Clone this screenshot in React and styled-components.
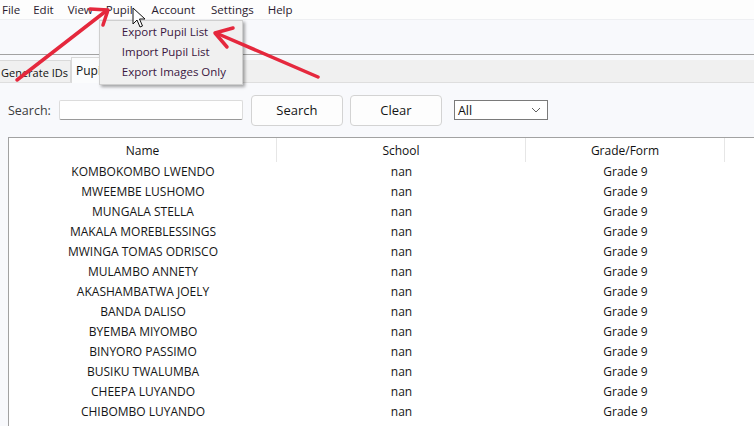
import React from 'react';
import styled, { createGlobalStyle } from 'styled-components';

const GlobalStyle = createGlobalStyle`
  html, body {
    margin: 0;
    padding: 0;
    background: #f8f9fc;
    overflow: hidden;
  }
  * { box-sizing: border-box; }
`;

const Window = styled.div`
  position: relative;
  width: 754px;
  height: 426px;
  overflow: hidden;
  display: flex;
  flex-direction: column;
  background: #f8f9fc;
  font-family: "Open Sans", "Noto Sans", sans-serif;
  color: #1b1b1b;
`;

const MenuBar = styled.nav`
  height: 20px;
  flex: none;
  display: flex;
  align-items: center;
  padding-left: 2px;
  background: #fdfdfd;
  border-bottom: 1px solid #eeeff2;
  font-size: 11.5px;
  color: #2a1a2e;
`;

const MenuItem = styled.div`
  position: relative;
  height: 19px;
  line-height: 19px;
  margin-right: ${p => p.gap ?? 14}px;
`;

const Dropdown = styled.div`
  position: absolute;
  top: 20px;
  left: -7px;
  width: 144px;
  padding: 1px 0 2px;
  background: #f0f0f0;
  border: 1px solid #cfcfcf;
  box-shadow: 2px 2px 3px rgba(0, 0, 0, 0.35);
  z-index: 5;
`;

const DropdownItem = styled.div`
  height: 20px;
  line-height: 20px;
  padding-left: 22px;
  font-size: 11.5px;
  color: #3a1640;
  white-space: nowrap;
`;

const ToolArea = styled.div`
  height: 35px;
  flex: none;
  background: #f8f9fc;
  border-bottom: 1px solid #a2a2a2;
`;

const TabStrip = styled.div`
  flex: none;
  margin-top: 5px;
  height: 23px;
  display: flex;
  align-items: flex-end;
  background: #f0f0f0;
  border-bottom: 1px solid #dedede;
`;

const Tab = styled.div`
  height: ${p => (p.active ? '26px' : '22px')};
  line-height: ${p => (p.active ? '25px' : '23px')};
  margin-bottom: ${p => (p.active ? '-1px' : '0')};
  padding: ${p => (p.active ? '0 8px 0 4px' : '0 2px 0 1px')};
  background: ${p => (p.active ? '#fbfcfd' : '#f0f0f0')};
  border: 1px solid #d9d9d9;
  border-left: ${p => (p.active ? '1px solid #d9d9d9' : 'none')};
  border-bottom: none;
  font-size: ${p => (p.active ? '12px' : '11px')};
  color: #111;
  white-space: nowrap;
`;

const SearchPanel = styled.div`
  height: 54px;
  flex: none;
  display: flex;
  align-items: center;
  padding: 0 8px;
`;

const Label = styled.span`
  font-size: 12.5px;
  color: #3c3c3c;
  margin-right: 8px;
`;

const TextInput = styled.div`
  width: 184px;
  height: 20px;
  background: #fff;
  border: 1px solid #dcdcdc;
  border-bottom-color: #9a9a9a;
  border-radius: 2px;
  margin-right: 8px;
`;

const Button = styled.div`
  width: 92px;
  height: 31px;
  display: flex;
  align-items: center;
  justify-content: center;
  background: #fdfdfd;
  border: 1px solid #d3d3d3;
  border-radius: 4px;
  font-size: 13px;
  color: #151515;
  margin-right: ${p => p.gap || 0}px;
`;

const Select = styled.div`
  width: 94px;
  height: 20px;
  display: flex;
  align-items: center;
  justify-content: space-between;
  padding: 0 6px 0 3px;
  background: #fff;
  border: 1px solid #7a7a7a;
  font-size: 12.5px;
  color: #111;
`;

const Table = styled.div`
  flex: 1;
  margin-left: 8px;
  background: #fff;
  border-left: 1px solid #a2a2a2;
  border-top: 1px solid #a2a2a2;
`;

const HeaderRow = styled.div`
  display: flex;
  height: 24px;
`;

const HeaderCell = styled.div`
  width: ${p => p.w}px;
  flex: none;
  display: flex;
  align-items: center;
  justify-content: center;
  border-right: 1px solid #e6e6e6;
  font-size: 12px;
  color: #111;
`;

const Row = styled.div`
  display: flex;
  height: 20px;
`;

const Cell = styled.div`
  width: ${p => p.w}px;
  flex: none;
  text-align: center;
  line-height: 20px;
  font-size: 12px;
  color: #151515;
  white-space: nowrap;
`;

const Overlay = styled.svg`
  position: absolute;
  left: 0;
  top: 0;
  pointer-events: none;
  z-index: 10;
`;

const COLS = [268, 249, 199];

const pupils = [
  'KOMBOKOMBO LWENDO',
  'MWEEMBE LUSHOMO',
  'MUNGALA STELLA',
  'MAKALA MOREBLESSINGS',
  'MWINGA TOMAS ODRISCO',
  'MULAMBO ANNETY',
  'AKASHAMBATWA JOELY',
  'BANDA DALISO',
  'BYEMBA MIYOMBO',
  'BINYORO PASSIMO',
  'BUSIKU TWALUMBA',
  'CHEEPA LUYANDO',
  'CHIBOMBO LUYANDO',
];

export default function App() {
  return (
    <Window>
      <GlobalStyle />
      <MenuBar>
        <MenuItem gap={13}>File</MenuItem>
        <MenuItem>Edit</MenuItem>
        <MenuItem gap={13}>View</MenuItem>
        <MenuItem gap={19}>
          Pupil
          <Dropdown>
            <DropdownItem>Export Pupil List</DropdownItem>
            <DropdownItem>Import Pupil List</DropdownItem>
            <DropdownItem>Export Images Only</DropdownItem>
          </Dropdown>
        </MenuItem>
        <MenuItem gap={16}>Account</MenuItem>
        <MenuItem gap={14}>Settings</MenuItem>
        <MenuItem>Help</MenuItem>
      </MenuBar>

      <ToolArea />

      <TabStrip>
        <Tab>Generate IDs</Tab>
        <Tab active>Pupil List</Tab>
      </TabStrip>

      <SearchPanel>
        <Label>Search:</Label>
        <TextInput />
        <Button gap={7}>Search</Button>
        <Button gap={12}>Clear</Button>
        <Select>
          <span>All</span>
          <svg width="10" height="6" viewBox="0 0 10 6">
            <path d="M1 1 L5 5 L9 1" fill="none" stroke="#606060" strokeWidth="1" />
          </svg>
        </Select>
      </SearchPanel>

      <Table>
        <HeaderRow>
          <HeaderCell w={COLS[0]}>Name</HeaderCell>
          <HeaderCell w={COLS[1]}>School</HeaderCell>
          <HeaderCell w={COLS[2]}>Grade/Form</HeaderCell>
        </HeaderRow>
        {pupils.map(name => (
          <Row key={name}>
            <Cell w={COLS[0]}>{name}</Cell>
            <Cell w={COLS[1]}>nan</Cell>
            <Cell w={COLS[2]}>Grade 9</Cell>
          </Row>
        ))}
      </Table>

      <Overlay width="754" height="426" viewBox="0 0 754 426">
        <g stroke="#e5283d" strokeWidth="3.5" strokeLinecap="round" strokeLinejoin="round" fill="none">
          <path d="M17 80 L106 11" />
          <path d="M90 9 L108 10 L103 25" />
          <path d="M318 77 L216 33" />
          <path d="M233 28 L215 33 L227 47" />
        </g>
        <path
          d="M133 8 L133 24 L137 20 L140 27 L142.5 26 L139.5 19 L145 19 Z"
          fill="#fff"
          stroke="#111"
          strokeWidth="1"
          strokeLinejoin="round"
        />
      </Overlay>
    </Window>
  );
}
